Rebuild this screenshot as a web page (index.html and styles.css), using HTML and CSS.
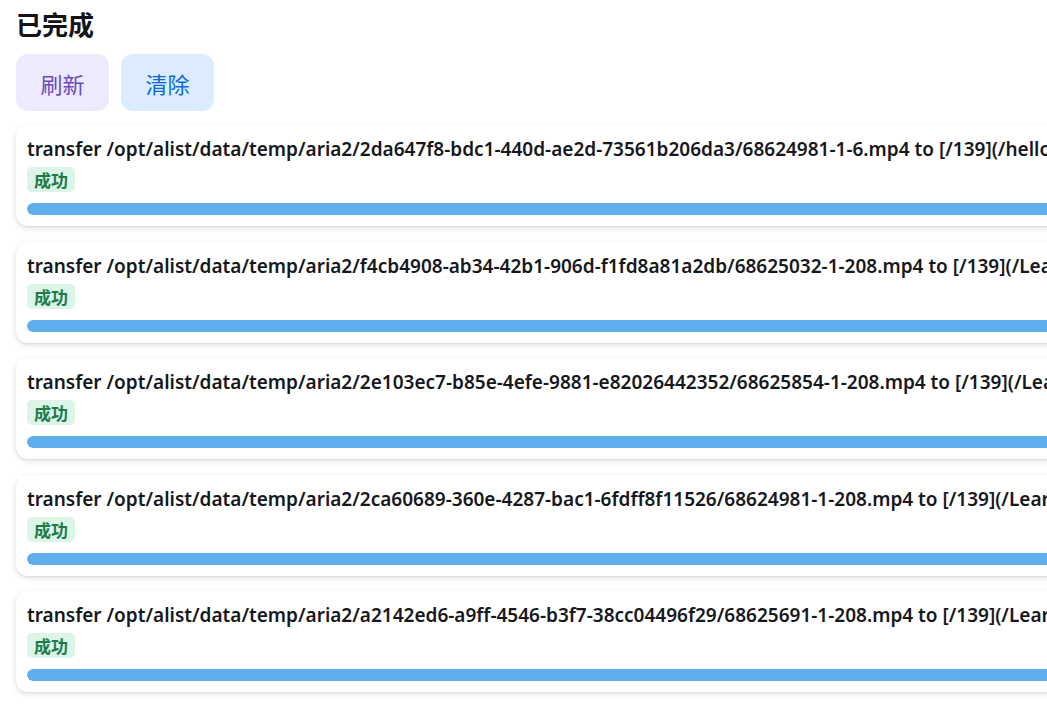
FILE: index.html
```html
<!DOCTYPE html>
<html lang="zh">
<head>
<meta charset="utf-8">
<title>已完成</title>
<link rel="stylesheet" href="styles.css">
</head>
<body>
<main class="page">
  <h2 class="title">已完成</h2>
  <div class="actions">
    <button class="btn btn-purple">刷新</button>
    <button class="btn btn-blue">清除</button>
  </div>
  <div class="list">
    <div class="task">
      <p class="name">transfer /opt/alist/data/temp/aria2/2da647f8-bdc1-440d-ae2d-73561b206da3/68624981-1-6.mp4 to [/139](/hello/LearnPython/68624981-1-6.mp4)</p>
      <span class="badge">成功</span>
      <div class="progress"><div class="bar" style="width:100%"></div></div>
    </div>
    <div class="task">
      <p class="name">transfer /opt/alist/data/temp/aria2/f4cb4908-ab34-42b1-906d-f1fd8a81a2db/68625032-1-208.mp4 to [/139](/LearnPython/68625032-1-208.mp4)</p>
      <span class="badge">成功</span>
      <div class="progress"><div class="bar" style="width:100%"></div></div>
    </div>
    <div class="task">
      <p class="name">transfer /opt/alist/data/temp/aria2/2e103ec7-b85e-4efe-9881-e82026442352/68625854-1-208.mp4 to [/139](/LearnPython/68625854-1-208.mp4)</p>
      <span class="badge">成功</span>
      <div class="progress"><div class="bar" style="width:100%"></div></div>
    </div>
    <div class="task">
      <p class="name">transfer /opt/alist/data/temp/aria2/2ca60689-360e-4287-bac1-6fdff8f11526/68624981-1-208.mp4 to [/139](/LearnPython/68624981-1-208.mp4)</p>
      <span class="badge">成功</span>
      <div class="progress"><div class="bar" style="width:100%"></div></div>
    </div>
    <div class="task">
      <p class="name">transfer /opt/alist/data/temp/aria2/a2142ed6-a9ff-4546-b3f7-38cc04496f29/68625691-1-208.mp4 to [/139](/LearnPython/68625691-1-208.mp4)</p>
      <span class="badge">成功</span>
      <div class="progress"><div class="bar" style="width:100%"></div></div>
    </div>
  </div>
</main>
</body>
</html>
```
FILE: styles.css
```css
html {
  overflow: hidden;
  background: #ffffff;
}
body {
  margin: 0;
  font-family: "Noto Sans", "Noto Sans CJK SC", sans-serif;
  color: #16181d;
}
.page {
  padding: 8px 16px 16px;
  display: flex;
  flex-direction: column;
  align-items: flex-start;
}
.title {
  margin: 0;
  font-size: 26px;
  line-height: 32px;
  font-weight: 700;
  font-family: "Noto Sans CJK SC", sans-serif;
  color: #111318;
}
.actions {
  display: flex;
  gap: 12px;
  margin-top: 14px;
}
.btn {
  border: none;
  height: 57px;
  padding: 0 24.5px;
  border-radius: 12px;
  font-family: "Noto Sans CJK SC", sans-serif;
  font-size: 22px;
  font-weight: 400;
  cursor: pointer;
}
.btn-purple {
  background: #ede9fe;
  color: #6a4cba;
}
.btn-blue {
  background: #dcebfe;
  color: #0b6ad6;
}
.list {
  margin-top: 14px;
  display: flex;
  flex-direction: column;
  gap: 15.5px;
  width: max-content;
}
.task {
  background: #fff;
  border-radius: 12px;
  box-shadow: 0 2px 6px rgba(0, 0, 0, 0.12), 0 1px 2px rgba(0, 0, 0, 0.06);
  padding: 12px 11px 11px;
  display: flex;
  flex-direction: column;
  align-items: flex-start;
}
.name {
  margin: 0;
  white-space: nowrap;
  font-size: 19px;
  line-height: 24px;
  font-weight: 600;
  color: #16181d;
}
.badge {
  margin-top: 6px;
  height: 25px;
  line-height: 25px;
  padding: 0 7px;
  border-radius: 5px;
  background: #dcf5e6;
  color: #1e7b4b;
  font-family: "Noto Sans CJK SC", sans-serif;
  font-size: 17px;
  font-weight: 700;
}
.progress {
  margin-top: 11px;
  width: 100%;
  height: 12px;
  border-radius: 6px;
  background: #e2e8f0;
  overflow: hidden;
}
.bar {
  height: 100%;
  background: #5eaeec;
  border-radius: 6px;
}
```
